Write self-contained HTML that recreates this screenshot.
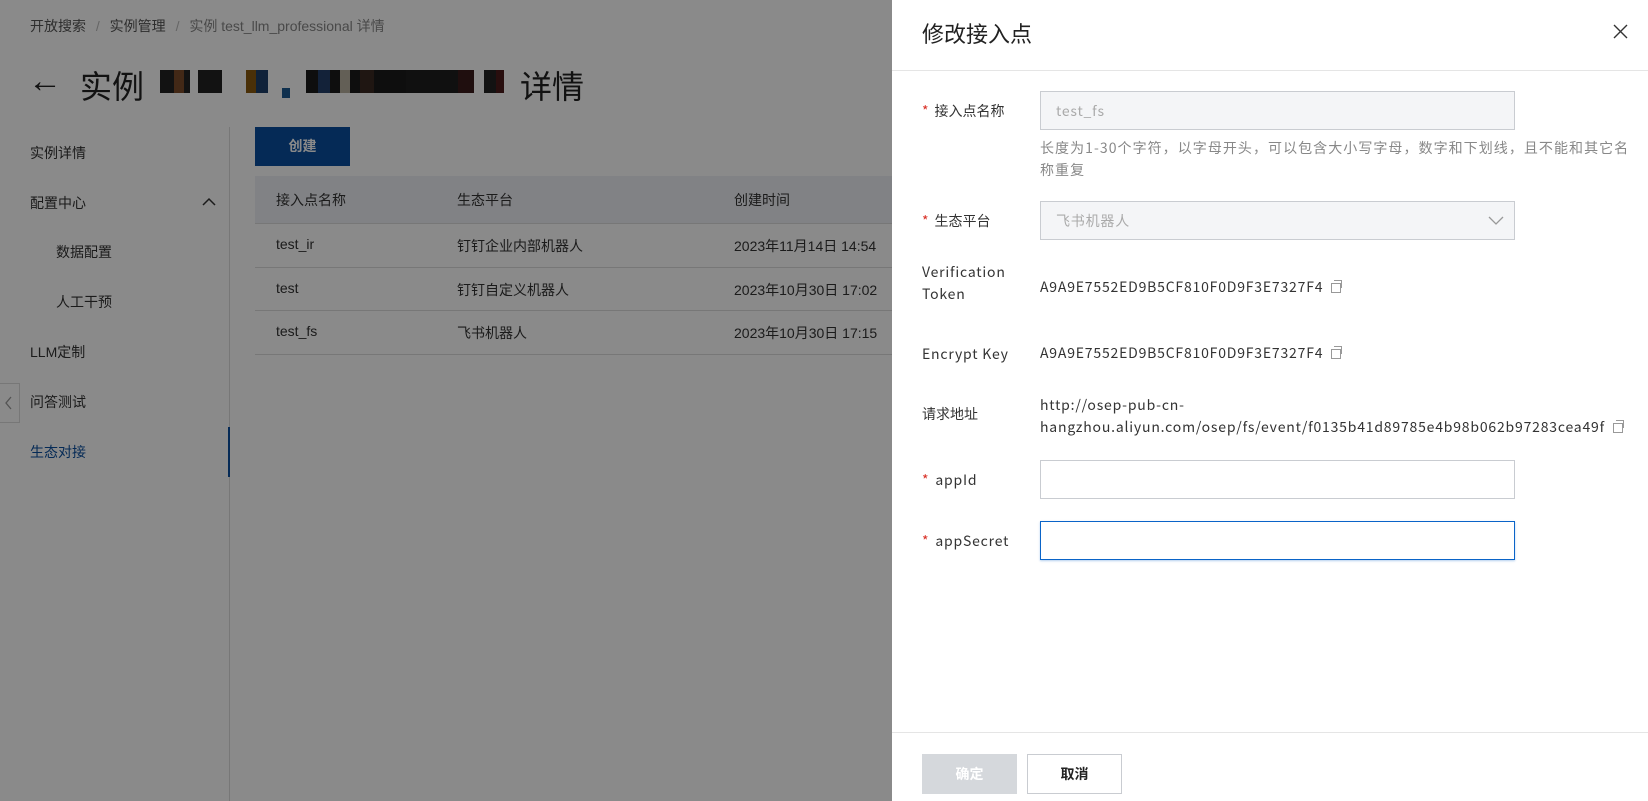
<!DOCTYPE html>
<html><head><meta charset="utf-8"><style>
*{margin:0;padding:0;box-sizing:border-box}
body{width:1648px;height:801px;overflow:hidden;position:relative;background:#fff;font-family:"Liberation Sans","Noto Sans CJK SC",sans-serif;color:#333;font-size:14px}
.abs{position:absolute;white-space:nowrap}
.mask{position:absolute;left:0;top:0;width:892px;height:801px;background:rgba(0,0,0,0.46)}
.drawer{position:absolute;left:892px;top:0;width:756px;height:801px;background:#fff;font-family:"Noto Sans CJK SC",sans-serif;line-height:20px;letter-spacing:0.8px}
.lbl{position:absolute;left:30px;font-size:14px;color:#333;white-space:nowrap}
.req{color:#d93026;margin-right:6px}
.inp{position:absolute;left:148px;width:475px;height:39px;border:1px solid #c9ccd1;background:#fff}
.copy{display:inline-block;width:10px;height:10px;border:1px solid #999;margin-left:8px;position:relative;vertical-align:-1px}
.copy:after{content:"";position:absolute;left:2px;top:-4px;width:7px;height:7px;border:1px solid #999;border-left:none;border-bottom:none}
.blk{position:absolute;height:23px;top:70px}
</style></head><body>
<div class="abs" style="left:30px;top:16px;font-size:14px;color:#555">开放搜索 <span style="color:#bbb;margin:0 6px">/</span> 实例管理 <span style="color:#bbb;margin:0 6px">/</span> <span style="color:#888">实例 test_llm_professional 详情</span></div>
<div class="abs" style="left:28px;top:62px;font-size:34px;color:#222">&#8592;</div>
<div class="abs" style="left:80px;top:62px;font-size:32px;color:#222">实例</div>
<div class="blk" style="left:160px;width:30px;background:#222"></div>
<div class="blk" style="left:174px;width:10px;background:#7a4a2a"></div>
<div class="blk" style="left:198px;width:24px;background:#222"></div>
<div class="blk" style="left:246px;width:10px;background:#8a5a10"></div>
<div class="blk" style="left:256px;width:12px;background:#1e3f6a"></div>
<div class="blk" style="left:282px;width:8px;top:88px;height:10px;background:#1c5a90"></div>
<div class="blk" style="left:306px;width:100px;background:#1a1a1a"></div>
<div class="blk" style="left:318px;width:12px;background:#24406a"></div>
<div class="blk" style="left:340px;width:10px;background:#b8b0a0"></div>
<div class="blk" style="left:360px;width:14px;background:#3a2a22"></div>
<div class="blk" style="left:406px;width:56px;background:#1f1f1f"></div>
<div class="blk" style="left:458px;width:16px;background:#3a1a1a"></div>
<div class="blk" style="left:484px;width:12px;background:#222"></div>
<div class="blk" style="left:496px;width:8px;background:#4a1a1a"></div>
<div class="abs" style="left:520px;top:62px;font-size:32px;color:#222">详情</div>

<div class="abs" style="left:30px;top:143px">实例详情</div>
<div class="abs" style="left:30px;top:193px">配置中心</div>
<svg class="abs" style="left:202px;top:197px" width="14" height="10"><path d="M1 8 L7 2 L13 8" fill="none" stroke="#333" stroke-width="1.5"/></svg>
<div class="abs" style="left:56px;top:242px">数据配置</div>
<div class="abs" style="left:56px;top:292px">人工干预</div>
<div class="abs" style="left:30px;top:342px">LLM定制</div>
<div class="abs" style="left:30px;top:392px">问答测试</div>
<div class="abs" style="left:30px;top:442px;color:#0a4fa0">生态对接</div>
<div class="abs" style="left:229px;top:127px;width:1px;height:674px;background:#ddd"></div>
<div class="abs" style="left:228px;top:427px;width:2px;height:50px;background:#0a4fa0"></div>
<div class="abs" style="left:0;top:383px;width:20px;height:40px;background:#fff;border:1px solid #ddd;border-left:none"></div>
<svg class="abs" style="left:5px;top:396px" width="8" height="14"><path d="M6 1 L1 7 L6 13" fill="none" stroke="#999" stroke-width="1.3"/></svg>
<div class="abs" style="left:255px;top:127px;width:95px;height:39px;background:#0a4fa0;color:#fff;font-weight:bold;text-align:center;line-height:39px">创建</div>
<div class="abs" style="left:255px;top:176px;width:640px;height:48px;background:#eef0f5;border-bottom:1px solid #ddd"></div>
<div class="abs" style="left:276px;top:190px">接入点名称</div>
<div class="abs" style="left:457px;top:190px">生态平台</div>
<div class="abs" style="left:734px;top:190px">创建时间</div>
<div class="abs" style="left:255px;top:267px;width:640px;height:1px;background:#ddd"></div>
<div class="abs" style="left:255px;top:310px;width:640px;height:1px;background:#ddd"></div>
<div class="abs" style="left:255px;top:354px;width:640px;height:1px;background:#ddd"></div>
<div class="abs" style="left:276px;top:236px">test_ir</div>
<div class="abs" style="left:457px;top:236px">钉钉企业内部机器人</div>
<div class="abs" style="left:734px;top:236px">2023年11月14日 14:54</div>
<div class="abs" style="left:276px;top:280px">test</div>
<div class="abs" style="left:457px;top:280px">钉钉自定义机器人</div>
<div class="abs" style="left:734px;top:280px">2023年10月30日 17:02</div>
<div class="abs" style="left:276px;top:323px">test_fs</div>
<div class="abs" style="left:457px;top:323px">飞书机器人</div>
<div class="abs" style="left:734px;top:323px">2023年10月30日 17:15</div>
<div class="mask"></div>

<div class="drawer">
<div class="abs" style="left:30px;top:18px;font-size:22px;line-height:30px;color:#222;letter-spacing:0">修改接入点</div>
<svg class="abs" style="left:721px;top:24px" width="15" height="15"><path d="M1 1L14 14M14 1L1 14" stroke="#333" stroke-width="1.4"/></svg>
<div class="abs" style="left:0;top:70px;width:756px;height:1px;background:#e5e5e5"></div>

<div class="lbl" style="top:101px;letter-spacing:0"><span class="req">*</span>接入点名称</div>
<div class="inp" style="top:91px;background:#f4f5f7;color:#aaa;padding:9px 15px">test_fs</div>
<div class="abs" style="left:148px;top:137px;font-size:14px;color:#888;line-height:22px;letter-spacing:1.05px">长度为1-30个字符，以字母开头，可以包含大小写字母，数字和下划线，且不能和其它名<br>称重复</div>

<div class="lbl" style="top:211px;letter-spacing:0"><span class="req">*</span>生态平台</div>
<div class="inp" style="top:201px;background:#f4f5f7;color:#aaa;padding:9px 15px">飞书机器人</div>
<svg class="abs" style="left:596px;top:216px" width="16" height="10"><path d="M1 1L8 8L15 1" fill="none" stroke="#999" stroke-width="1.3"/></svg>

<div class="lbl" style="top:261px;line-height:22px">Verification<br>Token</div>
<div class="abs" style="left:148px;top:277px;color:#333">A9A9E7552ED9B5CF810F0D9F3E7327F4<span class="copy"></span></div>

<div class="lbl" style="top:344px">Encrypt Key</div>
<div class="abs" style="left:148px;top:343px;color:#333">A9A9E7552ED9B5CF810F0D9F3E7327F4<span class="copy"></span></div>

<div class="lbl" style="top:404px;letter-spacing:0">请求地址</div>
<div class="abs" style="left:148px;top:394px;line-height:22px">http://osep-pub-cn-<br>hangzhou.aliyun.com/osep/fs/event/f0135b41d89785e4b98b062b97283cea49f<span class="copy"></span></div>

<div class="lbl" style="top:470px"><span class="req">*</span>appId</div>
<div class="inp" style="top:460px"></div>
<div class="lbl" style="top:531px"><span class="req">*</span>appSecret</div>
<div class="inp" style="top:521px;border-color:#0a64c8;box-shadow:0 1px 2px rgba(10,100,200,.3)"></div>

<div class="abs" style="left:0;top:732px;width:756px;height:1px;background:#e5e5e5"></div>
<div class="abs" style="left:30px;top:754px;width:95px;height:40px;background:#d5d8dc;color:#fff;font-weight:bold;text-align:center;line-height:40px;letter-spacing:0">确定</div>
<div class="abs" style="left:135px;top:754px;width:95px;height:40px;border:1px solid #c9ccd1;color:#222;font-weight:bold;text-align:center;line-height:38px;letter-spacing:0">取消</div>
</div>
</body></html>
